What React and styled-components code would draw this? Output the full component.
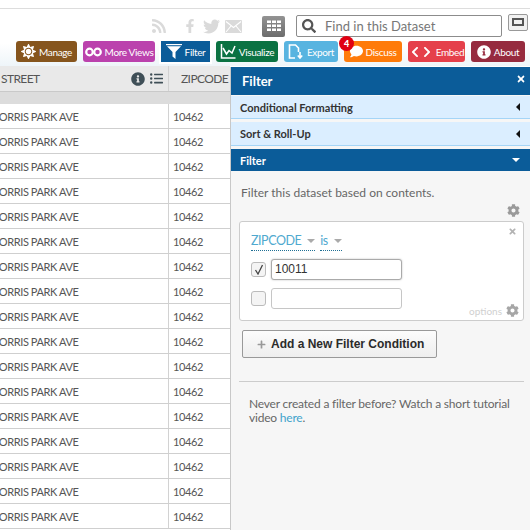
import React from 'react';
import styled, { createGlobalStyle } from 'styled-components';
import {
  FaRss, FaFacebookF, FaTwitter, FaSearch, FaComment,
  FaInfoCircle, FaChevronLeft, FaChevronRight, FaCog, FaSun, FaListUl, FaTimes, FaPlus,
} from 'react-icons/fa';

const GlobalStyle = createGlobalStyle`
  html, body {
    margin: 0;
    padding: 0;
    background: #fff;
    overflow: hidden;
  }
  body {
    font-family: Lato, "Open Sans", "Liberation Sans", sans-serif;
  }
`;

const Page = styled.div`
  width: 530px;
  height: 530px;
  overflow: hidden;
  display: flex;
  flex-direction: column;
  padding-top: 8px;
  box-sizing: border-box;
`;

const Header = styled.div`
  border-top: 1px solid #ddd;
  height: 58px;
  box-sizing: border-box;
  padding-top: 6px;
  display: flex;
  flex-direction: column;
  background: linear-gradient(#fff 60%, #eef5f9);
`;

const TopRow = styled.div`
  display: flex;
  align-items: center;
  height: 22px;
  padding-left: 151px;
`;

const SocialIcons = styled.div`
  display: flex;
  align-items: center;
  color: #dadada;
  width: 111px;
`;

const Social = styled.span`
  display: flex;
  margin-left: ${p => p.$gap || 0}px;
`;

const GridBtn = styled.div`
  width: 23px;
  height: 21px;
  background: linear-gradient(#939393, #6c6c6c);
  border-radius: 2px;
  display: flex;
  align-items: center;
  justify-content: center;
  margin-right: 11px;
`;

const SearchBox = styled.div`
  width: 206px;
  height: 22px;
  box-sizing: border-box;
  border: 1px solid #8c8c8c;
  border-radius: 2px;
  display: flex;
  align-items: center;
  padding-left: 5px;
  gap: 9px;
  color: #555;
  background: #fff;
`;

const SearchText = styled.span`
  font-size: 13px;
  color: #777;
`;

const MiniBtn = styled.div`
  width: 18px;
  height: 15px;
  margin: -8px 0 0 6px;
  border: 1px solid #999;
  border-radius: 2px;
  background: #f1f1f1;
  display: flex;
  align-items: center;
  justify-content: center;
  &::after {
    content: "";
    width: 8px;
    height: 4px;
    border: 2px solid #555;
  }
`;

const Tabs = styled.div`
  display: flex;
  margin-top: 4px;
  padding-left: 16px;
  height: 21px;
`;

const Tab = styled.div`
  position: relative;
  flex: none;
  width: ${p => p.$w}px;
  margin-right: ${p => p.$mr}px;
  background: ${p => p.$bg};
  border-radius: 3px;
  color: #fff;
  display: flex;
  align-items: center;
  justify-content: center;
  gap: 3px;
  font-size: 10px;
  letter-spacing: -0.35px;
  white-space: nowrap;
  ${p => p.$active && 'border-radius: 0; box-shadow: 0 0 0 2px #fff;'}
`;

const Badge = styled.span`
  position: absolute;
  left: -5px;
  top: -5px;
  width: 15px;
  height: 15px;
  border-radius: 50%;
  background: #e00012;
  color: #fff;
  font-size: 9px;
  font-weight: 900;
  display: flex;
  align-items: center;
  justify-content: center;
`;

const Main = styled.div`
  flex: 1;
  display: flex;
  min-height: 0;
`;

const Table = styled.div`
  width: 230px;
  flex: none;
  display: flex;
  flex-direction: column;
  overflow: hidden;
`;

const Row = styled.div`
  display: flex;
  height: ${p => p.$h}px;
  flex: none;
  box-sizing: border-box;
  background: ${p => p.$bg || '#fff'};
  border-bottom: 1px solid ${p => p.$line || '#cfcfcf'};
  font-size: ${p => p.$fs || 11}px;
  letter-spacing: ${p => p.$ls || -0.4}px;
  color: #555;
`;

const StreetCell = styled.div`
  width: 169px;
  flex: none;
  box-sizing: border-box;
  border-right: 1px solid #d2d2d2;
  display: flex;
  align-items: center;
  overflow: hidden;
  white-space: nowrap;
`;

const ZipCell = styled.div`
  flex: 1;
  display: flex;
  align-items: center;
  padding-left: ${p => p.$pad}px;
`;

const Clipped = styled.span`
  margin-left: -11px;
`;

const HeadLabel = styled.span`
  flex: 1;
  padding-left: 1px;
`;

const HeadIcons = styled.span`
  display: flex;
  align-items: center;
  gap: 5px;
  color: #3f4f57;
  padding-right: 5px;
`;

const Panel = styled.div`
  flex: 1;
  border-left: 1px solid #c8c8c8;
  background: #f6f6f6;
  display: flex;
  flex-direction: column;
  margin-top: 1px;
  font-size: 12px;
  color: #666;
`;

const PanelTitle = styled.div`
  background: #0b5c99;
  height: 28px;
  color: #fff;
  font-size: 13px;
  font-weight: 700;
  padding: 0 4px 0 11px;
  display: flex;
  align-items: flex-start;
  justify-content: space-between;
  line-height: 29px;
  flex: none;
`;

const CloseMark = styled.span`
  display: flex;
  padding-top: 7px;
`;

const Section = styled.div`
  height: ${p => p.$h}px;
  flex: none;
  box-sizing: border-box;
  margin-top: ${p => p.$mt}px;
  display: flex;
  align-items: center;
  justify-content: space-between;
  padding: 0 10px 0 9px;
  font-size: 11px;
  font-weight: 700;
  background: ${p => (p.$open ? '#0b5c99' : '#dbeeff')};
  color: ${p => (p.$open ? '#fff' : '#333')};
  border-bottom: ${p => (p.$open ? 'none' : '1px solid #a5d5f7')};
`;

const ArrowLeft = styled.span`
  width: 0;
  height: 0;
  border-top: 4px solid transparent;
  border-bottom: 4px solid transparent;
  border-right: 4px solid #111;
`;

const ArrowDown = styled.span`
  width: 0;
  height: 0;
  border-left: 4px solid transparent;
  border-right: 4px solid transparent;
  border-top: 4px solid #fff;
`;

const Body = styled.div`
  padding: 14px 6px 0 8px;
  display: flex;
  flex-direction: column;
`;

const Intro = styled.div`
  padding-left: 2px;
  line-height: 16px;
`;

const GearRow = styled.div`
  display: flex;
  justify-content: flex-end;
  color: #9a9a9a;
  height: 13px;
  margin-top: 3px;
  padding-right: 4px;
  margin-bottom: 4px;
`;

const Card = styled.div`
  position: relative;
  height: 100px;
  box-sizing: border-box;
  background: #fff;
  border: 1px solid #ccc;
  border-radius: 3px;
  padding: 9px 11px 0;
  display: flex;
  flex-direction: column;
`;

const CardClose = styled.span`
  position: absolute;
  right: 6px;
  top: 5px;
  color: #b3b3b3;
  display: flex;
`;

const ConditionRow = styled.div`
  display: flex;
  align-items: center;
  height: 20px;
  font-size: 12.5px;
  letter-spacing: -0.45px;
  color: #4fa9cf;
  margin-bottom: 8px;
`;

const Picker = styled.span`
  border-bottom: 1px dotted #1f6f94;
  display: flex;
  align-items: center;
  gap: 6px;
  height: 19px;
  margin-right: ${p => p.$mr || 0}px;
`;

const GrayCaret = styled.span`
  width: 0;
  height: 0;
  border-left: 4px solid transparent;
  border-right: 4px solid transparent;
  border-top: 4px solid #aaa;
`;

const ValueRow = styled.div`
  display: flex;
  align-items: center;
  gap: 5px;
  height: 21px;
  margin-bottom: ${p => p.$mb || 0}px;
`;

const Check = styled.span`
  width: 13px;
  height: 13px;
  border: 1px solid #bbb;
  border-radius: 3px;
  background: #f4f4f4;
  display: flex;
  align-items: center;
  justify-content: center;
`;

const ValueInput = styled.div`
  width: 131px;
  height: 21px;
  box-sizing: border-box;
  border: 1px solid ${p => (p.$focus ? '#aaa' : '#c6c6c6')};
  border-radius: 3px;
  background: #fff;
  box-shadow: ${p => (p.$focus ? '0 0 2px #bbb' : 'none')};
  padding-left: 3px;
  font: 12px/19px "Liberation Sans", sans-serif;
  color: #333;
`;

const Options = styled.span`
  position: absolute;
  right: 4px;
  bottom: 3px;
  display: flex;
  align-items: center;
  gap: 4px;
  color: #a6a6a6;
  font-size: 10px;
`;

const OptionsLabel = styled.span`
  color: #d0d0d0;
`;

const AddButton = styled.div`
  margin: 9px 0 0 3px;
  width: 195px;
  height: 28px;
  box-sizing: border-box;
  border: 1px solid #999;
  border-radius: 2px;
  background: linear-gradient(#fcfcfc, #eeeeee);
  display: flex;
  align-items: center;
  padding-left: 14px;
  gap: 5px;
  color: #999;
`;

const AddLabel = styled.span`
  font: bold 12px "Liberation Sans", sans-serif;
  color: #2b2b2b;
`;

const Divider = styled.div`
  height: 1px;
  background: #ccc;
  margin-top: 23px;
`;

const Help = styled.div`
  padding: 15px 8px 0 10px;
  line-height: 14px;
  font-size: 12px;
  letter-spacing: -0.2px;
`;

const HelpLink = styled.span`
  color: #3fa3cc;
`;

const GridGlyph = () => (
  <svg width="14" height="12" viewBox="0 0 14 12" fill="#fff">
    {[0, 4, 8].map(y => [0, 5, 10].map(x => <rect key={x + '-' + y} x={x} y={y + 0.5} width="4" height="2.5" />))}
  </svg>
);

const MailGlyph = () => (
  <svg width="17" height="13" viewBox="0 0 17 13">
    <rect width="17" height="13" rx="1" fill="#dadada" />
    <path d="M1 1.500l7.500 6 7.500-6M1 12l5-6M16 12l-5-6" fill="none" stroke="#fff" strokeWidth="1.1" />
  </svg>
);

const Binoculars = () => (
  <svg width="17" height="10" viewBox="0 0 17 10" fill="none" stroke="#fff" strokeWidth="2.2">
    <circle cx="4.500" cy="5" r="3.300" />
    <circle cx="12.500" cy="5" r="3.300" />
  </svg>
);

const FunnelGlyph = () => (
  <svg width="16" height="15" viewBox="0 0 16 15" fill="#fff">
    <path d="M0 0h16v1.200H0z" />
    <path d="M1 2.200h14L9.500 8v7L6.500 12.500V8z" />
  </svg>
);

const ChartGlyph = () => (
  <svg width="16" height="15" viewBox="0 0 16 15" fill="none" stroke="#fff" strokeWidth="1.5">
    <path d="M1.500 0v14h14" />
    <path d="M3 4l3.500 6L9 6.500l3 2.500 3-7" />
  </svg>
);

const ExportGlyph = () => (
  <svg width="16" height="15" viewBox="0 0 16 15" fill="none" stroke="#fff" strokeWidth="1.6">
    <path d="M7 14H1.500V1h6l3 3v4" />
    <path d="M12 8v6M9.800 11.500l2.200 2.500 2.200-2.500" />
  </svg>
);

const CheckGlyph = () => (
  <svg width="10" height="11" viewBox="0 0 10 11" fill="none" stroke="#444" strokeWidth="1.300">
    <path d="M1.500 6l2.500 4L8.500 1" />
  </svg>
);

const tabs = [
  { label: 'Manage', bg: '#86551d', w: 61, mr: 6, icon: <FaSun size={15} /> },
  { label: 'More Views', bg: '#bb42ad', w: 72, mr: 6, icon: <Binoculars /> },
  { label: 'Filter', bg: '#0b5c99', w: 49, mr: 6, active: true, icon: <FunnelGlyph /> },
  { label: 'Visualize', bg: '#0a7242', w: 62, mr: 6, icon: <ChartGlyph /> },
  { label: 'Export', bg: '#58b4e0', w: 54, mr: 6, icon: <ExportGlyph /> },
  { label: 'Discuss', bg: '#ff7b0a', w: 58, mr: 6, badge: 4, icon: <FaComment size={13} /> },
  { label: 'Embed', bg: '#e5404b', w: 57, mr: 6, icon: <span style={{ display: 'flex' }}><FaChevronLeft size={12} /><FaChevronRight size={12} /></span> },
  { label: 'About', bg: '#962b3f', w: 54, mr: 0, icon: <FaInfoCircle size={14} /> },
];

const rows = Array.from({ length: 17 }, (_, i) => i);

const App = () => {
  return (
    <Page>
      <GlobalStyle />
      <Header>
        <TopRow>
          <SocialIcons>
            <Social><FaRss size={16} /></Social>
            <Social $gap={16}><FaFacebookF size={14} /></Social>
            <Social $gap={6}><FaTwitter size={17} /></Social>
            <Social $gap={5}><MailGlyph /></Social>
          </SocialIcons>
          <GridBtn><GridGlyph /></GridBtn>
          <SearchBox>
            <FaSearch size={14} />
            <SearchText>Find in this Dataset</SearchText>
          </SearchBox>
          <MiniBtn />
        </TopRow>
        <Tabs>
          {tabs.map(t => (
            <Tab key={t.label} $bg={t.bg} $w={t.w} $mr={t.mr} $active={t.active}>
              {t.badge && <Badge>{t.badge}</Badge>}
              {t.icon}
              <span>{t.label}</span>
            </Tab>
          ))}
        </Tabs>
      </Header>
      <Main>
        <Table>
          <Row $h={26} $bg="#e9e9e9" $line="#c9c9c9" $fs={12} $ls={-0.6}>
            <StreetCell>
              <HeadLabel>STREET</HeadLabel>
              <HeadIcons><FaInfoCircle size={14} /><FaListUl size={13} /></HeadIcons>
            </StreetCell>
            <ZipCell $pad={12}>ZIPCODE</ZipCell>
          </Row>
          <Row $h={12} $bg="#dcdcdc" $line="#dcdcdc" />
          {rows.map(i => (
            <Row key={i} $h={25}>
              <StreetCell><Clipped>MORRIS PARK AVE</Clipped></StreetCell>
              <ZipCell $pad={4}>10462</ZipCell>
            </Row>
          ))}
        </Table>
        <Panel>
          <PanelTitle>
            Filter
            <CloseMark><FaTimes size={10} /></CloseMark>
          </PanelTitle>
          <Section $h={23} $mt={1}>Conditional Formatting<ArrowLeft /></Section>
          <Section $h={24} $mt={3}>Sort &amp; Roll-Up<ArrowLeft /></Section>
          <Section $h={22} $mt={3} $open>Filter<ArrowDown /></Section>
          <Body>
            <Intro>Filter this dataset based on contents.</Intro>
            <GearRow><FaCog size={13} /></GearRow>
            <Card>
              <CardClose><FaTimes size={9} /></CardClose>
              <ConditionRow>
                <Picker $mr={5}>ZIPCODE <GrayCaret /></Picker>
                <Picker>is <GrayCaret /></Picker>
              </ConditionRow>
              <ValueRow $mb={8}>
                <Check><CheckGlyph /></Check>
                <ValueInput $focus>10011</ValueInput>
              </ValueRow>
              <ValueRow>
                <Check />
                <ValueInput />
              </ValueRow>
              <Options><OptionsLabel>options</OptionsLabel><FaCog size={13} /></Options>
            </Card>
            <AddButton>
              <FaPlus size={9} />
              <AddLabel>Add a New Filter Condition</AddLabel>
            </AddButton>
            <Divider />
            <Help>
              Never created a filter before? Watch a short tutorial video <HelpLink>here</HelpLink>.
            </Help>
          </Body>
        </Panel>
      </Main>
    </Page>
  );
};

export default App;
